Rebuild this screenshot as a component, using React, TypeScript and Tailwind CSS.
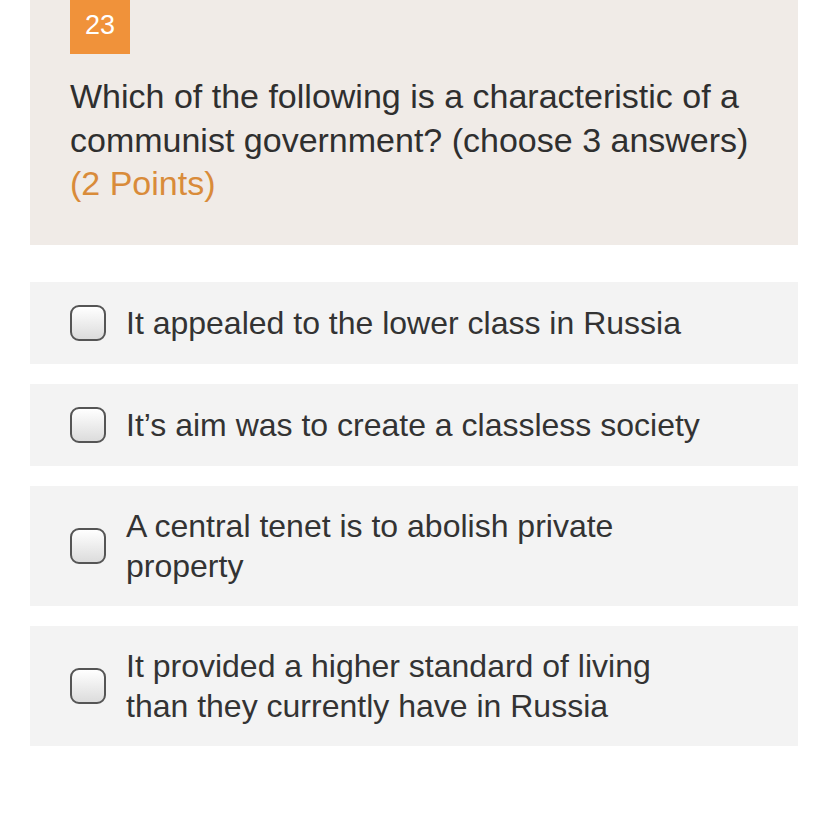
const options = [
  "It appealed to the lower class in Russia",
  "It\u2019s aim was to create a classless society",
  "A central tenet is to abolish private property",
  "It provided a higher standard of living than they currently have in Russia",
]

const Checkbox = () => (
  <span className="block h-[36px] w-[36px] shrink-0 rounded-[9px] border-2 border-[#555] bg-gradient-to-b from-white to-[#dcdcdc]" />
)

export default function App() {
  return (
    <div
      className="min-h-[828px] w-[828px] bg-white px-[30px] text-[#333]"
      style={{ fontFamily: '"Liberation Sans", Arial, sans-serif' }}
    >
      {/* Question header */}
      <div className="bg-[#f0ebe7] px-10 pb-[39.5px]">
        <div className="flex h-[54px] w-[60px] items-center justify-center bg-[#f0923a] pb-1 text-[27px] text-white">
          23
        </div>
        <p className="mt-[21px] text-[34px] leading-[43.5px] text-[#2f2f2f]">
          Which of the following is a characteristic of a communist government? (choose 3 answers)
          <br />
          <span className="text-[#d98b3a]">(2 Points)</span>
        </p>
      </div>

      {/* Answer options */}
      <div className="mt-[37px] flex flex-col gap-5">
        {options.map((opt) => (
          <label
            key={opt}
            className="flex min-h-[82px] items-center gap-[20px] bg-[#f3f3f3] py-5 pl-10 pr-[88px]"
          >
            <Checkbox />
            <span className="text-[32px] leading-[40px] text-[#333]">{opt}</span>
          </label>
        ))}
      </div>
    </div>
  )
}
